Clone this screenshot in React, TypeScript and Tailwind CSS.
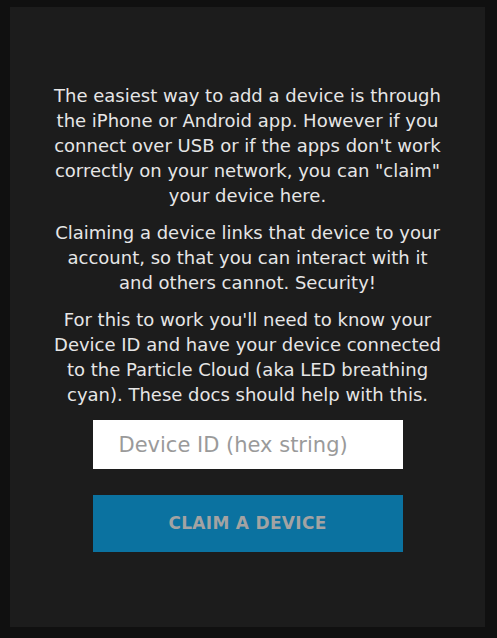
export default function App() {
  return (
    <div className="flex h-[638px] w-full bg-[#101010] pl-[10px] pt-[7px] font-['DejaVu_Sans',sans-serif]">
      <div className="flex h-[620px] w-[475px] flex-col items-center bg-[#1c1c1c] pt-[76px]">
        <div className="w-[430px] text-center text-[18px] leading-[25px] text-[#e6e6e6]">
          <p>
            The easiest way to add a device is through
            <br />
            the iPhone or Android app. However if you
            <br />
            connect over USB or if the apps don't work
            <br />
            correctly on your network, you can "claim"
            <br />
            your device here.
          </p>
          <p className="mt-3">
            Claiming a device links that device to your
            <br />
            account, so that you can interact with it
            <br />
            and others cannot. Security!
          </p>
          <p className="mt-3">
            For this to work you'll need to know your
            <br />
            Device ID and have your device connected
            <br />
            to the Particle Cloud (aka LED breathing
            <br />
            cyan). These docs should help with this.
          </p>
        </div>
        <input
          type="text"
          placeholder="Device ID (hex string)"
          className="mt-[13px] h-[49px] w-[310px] bg-white px-[26px] text-[21px] text-[#333] placeholder:text-[#9a9a9a] outline-none"
        />
        <button className="mt-[26px] h-[57px] w-[310px] bg-[#0b72a0] text-[17px] font-bold tracking-[0.3px] text-[#a3a3a3]">
          CLAIM A DEVICE
        </button>
      </div>
    </div>
  );
}
